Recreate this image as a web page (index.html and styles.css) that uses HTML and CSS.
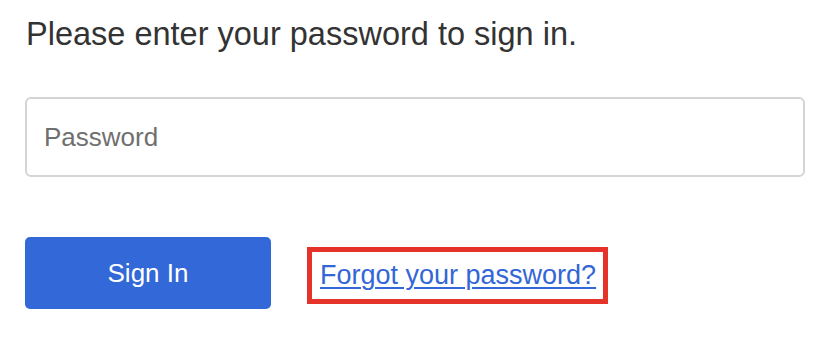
FILE: index.html
```html
<!DOCTYPE html>
<html lang="en">
<head>
<meta charset="utf-8">
<title>Sign in</title>
<link rel="stylesheet" href="styles.css">
</head>
<body>
<main class="signin">
  <p class="prompt">Please enter your password to sign in.</p>
  <input class="password" type="password" placeholder="Password">
  <div class="actions">
    <button class="btn-primary" type="button">Sign In</button>
    <span class="highlight"><a class="forgot" href="#">Forgot your password?</a></span>
  </div>
</main>
</body>
</html>
```
FILE: styles.css
```css
html, body {
  margin: 0;
  padding: 0;
  background: #ffffff;
}
body {
  font-family: "Liberation Sans", Arial, Helvetica, sans-serif;
}
.signin {
  display: flex;
  flex-direction: column;
  align-items: flex-start;
  padding: 15px 0 0 25px;
}
.prompt {
  margin: 0 0 0 1px;
  font-size: 32.5px;
  line-height: 38px;
  color: #333333;
}
.password {
  box-sizing: border-box;
  margin-top: 44px;
  width: 780px;
  height: 80px;
  border: 2px solid #d4d4d4;
  border-radius: 6px;
  padding: 0 17px;
  font-family: inherit;
  font-size: 26px;
  color: #333333;
  outline: none;
}
.password::placeholder {
  color: #6f6f6f;
}
.actions {
  margin-top: 60px;
  display: flex;
  align-items: center;
  gap: 36px;
}
.btn-primary {
  width: 246px;
  height: 72px;
  border: none;
  border-radius: 5px;
  background: #3268d8;
  color: #ffffff;
  font-family: inherit;
  font-size: 26px;
  padding: 0;
}
.highlight {
  display: inline-block;
  margin-top: 5px;
  border: 5px solid #e5332a;
  padding: 8px 7px 9px 8px;
}
.forgot {
  font-size: 27px;
  line-height: 30px;
  color: #3366d6;
  text-decoration: underline;
  text-decoration-thickness: 2px;
  text-underline-offset: 3px;
}
```
